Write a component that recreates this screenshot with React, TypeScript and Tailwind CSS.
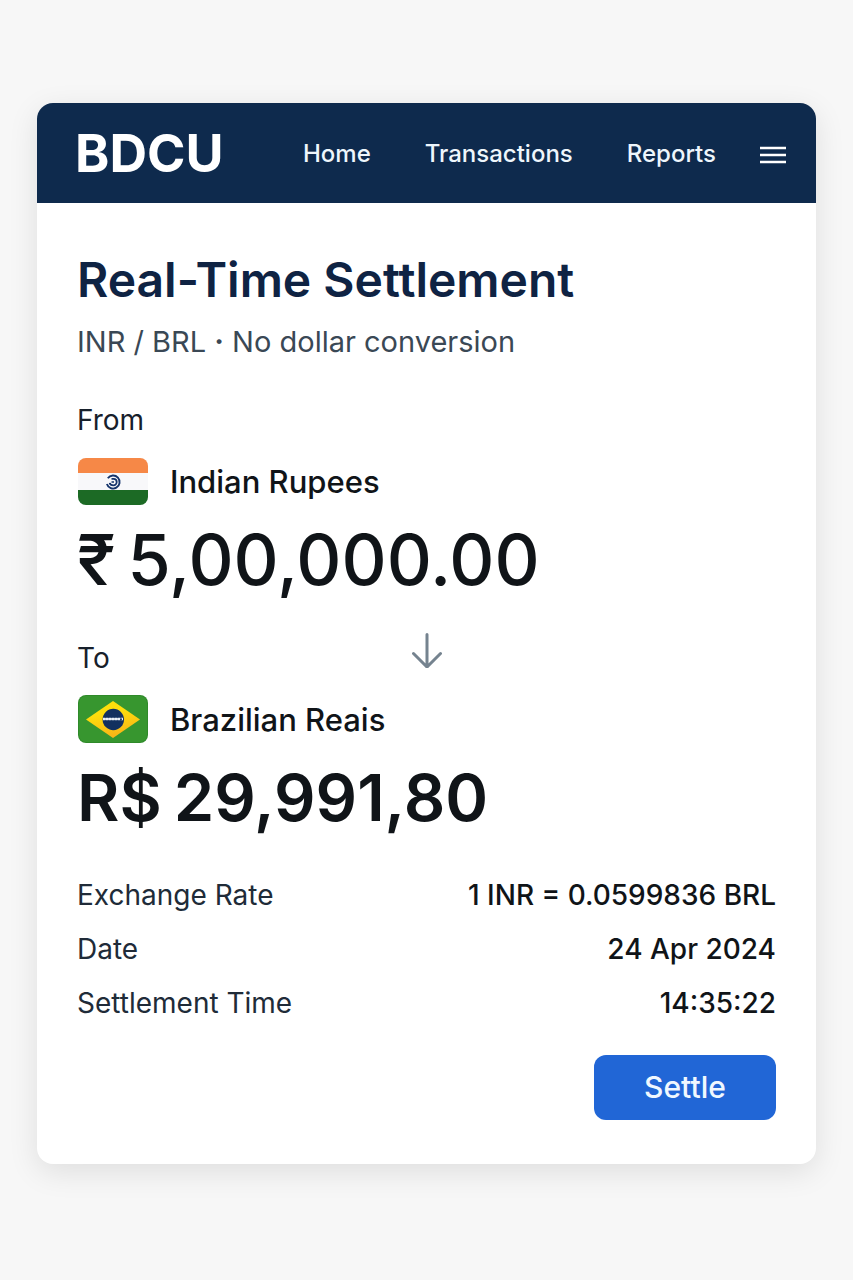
import React from "react";

const details = [
  { label: "Exchange Rate", value: "1 INR = 0.0599836 BRL" },
  { label: "Date", value: "24 Apr 2024" },
  { label: "Settlement Time", value: "14:35:22" },
];

function IndiaFlag() {
  return (
    <svg viewBox="0 0 70 47" className="h-[47px] w-[70px] shrink-0 rounded-lg" role="img" aria-label="India">
      <rect width="70" height="47" fill="#f8f8fa" />
      <rect width="70" height="15" fill="#f68847" />
      <rect y="32" width="70" height="15" fill="#1c6a25" />
      <g fill="none" stroke="#15346b">
        <path d="M29.800 20.300A6.500 6.500 0 1 1 28.900 26" strokeWidth="1.900" />
        <path d="M33.500 20.900H35.500a3.200 3.200 0 0 1 0 6.400C33.500 27.300 32 26.500 31.700 24.800" strokeWidth="1.800" />
        <path d="M33.500 24h2.500" strokeWidth="1.300" />
      </g>
    </svg>
  );
}

function BrazilFlag() {
  return (
    <svg viewBox="0 0 70 48" className="h-12 w-[70px] shrink-0 rounded-lg" role="img" aria-label="Brazil">
      <defs>
        <linearGradient id="rhombus" x1="0" y1="0" x2="0.3" y2="1">
          <stop offset="0.4" stopColor="#fdde0c" />
          <stop offset="1" stopColor="#f9b617" />
        </linearGradient>
      </defs>
      <rect width="70" height="48" fill="#2f8a2a" />
      <rect x="1" y="1" width="68" height="46" rx="7" fill="#37962f" />
      <path d="M35 6 62 24.500 35 43 8 24.500Z" fill="url(#rhombus)" />
      <circle cx="35.300" cy="24.500" r="10.700" fill="#12305f" />
      <path d="M25 24h20" stroke="#e9eff7" strokeWidth="2.600" strokeDasharray="2.500 0.500" />
      <path d="M25 24h20" stroke="#e9eff7" strokeWidth="1.400" />
      <circle cx="43" cy="24.200" r="1" fill="#12305f" />
    </svg>
  );
}

export default function App() {
  return (
    <div className="min-h-screen bg-[#f7f7f7] px-[37px] pt-[103px] pb-[116px] font-['Inter',sans-serif] text-[#101418]">
      <div className="overflow-hidden rounded-2xl bg-white shadow-[0_8px_30px_rgba(0,0,0,0.1)]">
        <header className="flex h-[100px] items-center bg-[#0e2a4d] pt-[2px] pr-[30px] pl-[38px] text-white">
          <span className="text-[52px] font-bold">BDCU</span>
          <nav className="ml-auto flex items-center gap-[54px] text-2xl font-medium text-[#eef6fc]">
            <a href="#home">Home</a>
            <a href="#transactions">Transactions</a>
            <a href="#reports">Reports</a>
          </nav>
          <button aria-label="Menu" className="ml-11 pt-[2px]">
            <svg viewBox="0 0 26 18" className="h-[18px] w-[26px]" stroke="currentColor" strokeWidth="2.500">
              <path d="M0 2h26M0 9h26M0 16h26" />
            </svg>
          </button>
        </header>
        <main className="px-10 pt-[49px] pb-11">
          <h1 className="text-5xl leading-[56px] font-semibold text-[#0f2343]">Real-Time Settlement</h1>
          <p className="mt-4 text-[29px] leading-9 text-[#3a4855]">
            INR / BRL <b>·</b> No dollar conversion
          </p>
          <p className="mt-[42px] text-[28px] leading-9 text-[#17202b]">From</p>
          <div className="mt-5 flex items-center gap-[22px] pl-px">
            <IndiaFlag />
            <span className="text-[31px] leading-[47px] font-medium">Indian Rupees</span>
          </div>
          <p className="mt-[6px] flex gap-3 text-[70px] leading-[98px] font-medium">
            <span>₹</span>
            <span>5,00,000.00</span>
          </p>
          <div className="mt-[23px] grid grid-cols-[1fr_auto_1fr] items-end">
            <p className="text-[28px] leading-9 text-[#17202b]">To</p>
            <svg viewBox="0 0 30 36" className="mb-2 h-9 w-[30px]" fill="none" stroke="#75838f" strokeWidth="3" strokeLinecap="round" strokeLinejoin="round">
              <path d="M15 2.500V35.500M1.500 21.500 15 35 28.500 21.500" />
            </svg>
          </div>
          <div className="mt-[19px] flex items-center gap-[22px] pl-px">
            <BrazilFlag />
            <span className="text-[31px] leading-[47px] font-medium">Brazilian Reais</span>
          </div>
          <p className="mt-[6px] flex gap-3 text-[65px] leading-[98px] font-semibold">
            <span>R$</span>
            <span>29,991,80</span>
          </p>
          <dl className="mt-[29px] flex flex-col gap-4 text-[28px] leading-[38px]">
            {details.map((d) => (
              <div key={d.label} className="flex justify-between">
                <dt className="text-[#202b38]">{d.label}</dt>
                <dd className="font-medium">{d.value}</dd>
              </div>
            ))}
          </dl>
          <div className="mt-[33px] flex justify-end">
            <button className="h-[65px] w-[182px] rounded-xl bg-[#2166d6] text-[30px] font-medium text-[#f0f8ff]">Settle</button>
          </div>
        </main>
      </div>
    </div>
  );
}
